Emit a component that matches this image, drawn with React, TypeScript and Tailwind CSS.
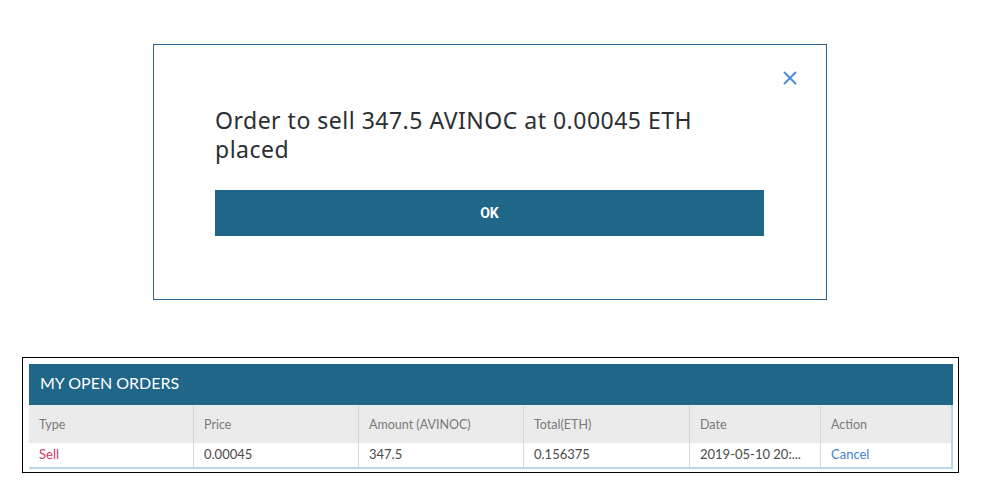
import { X } from 'lucide-react';

const columns = [
  { label: 'Type', w: 'w-[164px]' },
  { label: 'Price', w: 'w-[165px]' },
  { label: 'Amount (AVINOC)', w: 'w-[165px]' },
  { label: 'Total(ETH)', w: 'w-[166px]' },
  { label: 'Date', w: 'w-[131px]' },
  { label: 'Action', w: 'flex-1' },
];

export default function App() {
  return (
    <div className="min-h-screen w-[987px] bg-white pt-[44px] font-['Lato',sans-serif]">
      <div className="relative ml-[153px] w-[674px] border border-[#2f6190] pt-[61px] pb-[63px] pl-[61px] pr-[62px]">
        <button className="absolute right-[25px] top-[22px] text-[#4a8fdc]">
          <X size={22} strokeWidth={2.2} />
        </button>

        <p className="font-['Noto_Sans',sans-serif] text-[23px] leading-[29px] tracking-[0.5px] text-[#2b2f33]">
          Order to sell 347.5 AVINOC at 0.00045 ETH
          <br />
          placed
        </p>

        <button className="mt-[26px] h-[46px] w-full bg-[#1f6689] text-[14px] font-bold text-white font-['Roboto',sans-serif]">
          OK
        </button>
      </div>

      <div className="ml-[22px] mt-[57px] w-[937px] border border-black pt-[6px] pl-[6px] pr-[5px] pb-[3px]">
        <div className="flex h-[41px] items-center bg-[#1f6689] pl-[11px] pb-[3px] text-[16px] text-white">
          MY OPEN ORDERS
        </div>

        <div className="border-r-2 border-b-2 border-[#b9d7e6]">
          <div className="flex h-[38px] bg-[#ebebeb] text-[12.5px] text-[#7a7a7a]">
            {columns.map((c, i) => (
              <div
                key={c.label}
                className={`${c.w} flex items-center pl-[10px] pt-[2px] ${i > 0 ? 'border-l border-[#d6d6d6]' : ''}`}
              >
                {c.label}
              </div>
            ))}
          </div>

          <div className="flex h-[24px] bg-white text-[13px] text-[#4a4a4a]">
            <div className="w-[164px] flex items-center pl-[10px] text-[#d23a5f]">Sell</div>
            <div className="w-[165px] flex items-center pl-[10px] border-l border-[#d6d6d6]">0.00045</div>
            <div className="w-[165px] flex items-center pl-[10px] border-l border-[#d6d6d6]">347.5</div>
            <div className="w-[166px] flex items-center pl-[10px] border-l border-[#d6d6d6]">0.156375</div>
            <div className="w-[131px] flex items-center pl-[10px] border-l border-[#d6d6d6]">
              <span className="truncate">2019-05-10 20:...</span>
            </div>
            <div className="flex-1 flex items-center pl-[10px] border-l border-[#d6d6d6] text-[#3f7fcf]">Cancel</div>
          </div>
        </div>
      </div>
    </div>
  );
}
